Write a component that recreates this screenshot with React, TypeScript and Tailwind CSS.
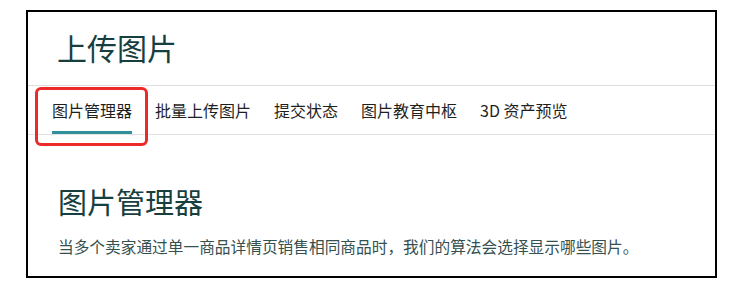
const tabs = ["图片管理器", "批量上传图片", "提交状态", "图片教育中枢", "3D 资产预览"];

export default function App() {
  return (
    <div
      className="w-[737px] h-[292px] bg-white pt-[10px] pl-[26px]"
      style={{ fontFamily: '"Noto Sans CJK SC", "Noto Sans", sans-serif' }}
    >
      <div className="w-[691px] h-[268px] border-2 border-black flex flex-col">
        {/* Page title */}
        <div className="h-[74px] pl-[29px] pt-[15px] border-b border-[#dedede]">
          <h1 className="text-[30px] leading-[40px] text-[#173f40]">上传图片</h1>
        </div>

        {/* Tabs */}
        <div className="h-[49px] pl-[24px] flex items-stretch gap-[23px] border-b border-[#e3e3e3]">
          {tabs.map((t, i) => (
            <div key={t} className="relative flex items-center">
              <span className="text-[16px] leading-[24px] text-[#1f1f1f]">{t}</span>
              {i === 0 && (
                <>
                  <div className="absolute left-0 right-0 bottom-0 h-[3px] bg-[#2f8f9b]" />
                  <div className="absolute -left-[17px] -right-[16px] top-[1px] -bottom-[12px] border-[3px] border-[#ec2a2a] rounded-[6px]" />
                </>
              )}
            </div>
          ))}
        </div>

        {/* Section */}
        <div className="pl-[30px] pt-[48px]">
          <h2 className="text-[29px] leading-[36px] text-[#173f40]">图片管理器</h2>
          <p className="mt-[16px] text-[15.7px] leading-[24px] text-[#34504f]">
            当多个卖家通过单一商品详情页销售相同商品时，我们的算法会选择显示哪些图片。
          </p>
        </div>
      </div>
    </div>
  );
}
